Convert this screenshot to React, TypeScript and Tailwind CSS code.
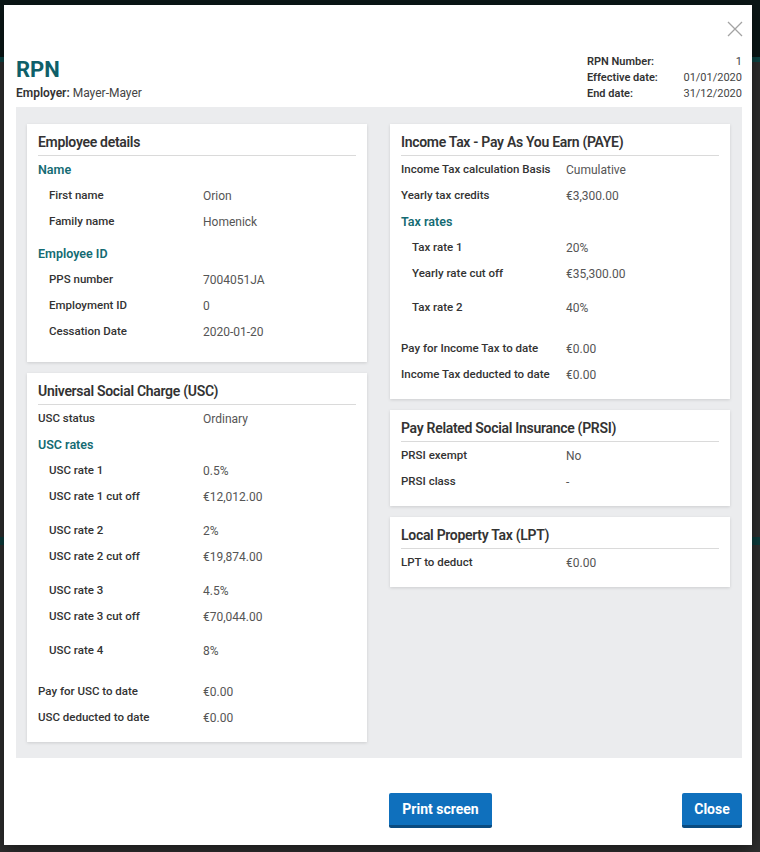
import React from "react";

type RowProps = { label: string; value: string; indent?: boolean };

const Row = ({ label, value, indent }: RowProps) => (
  <div className="flex h-[26px] items-center pt-[2px]">
    <div
      className={
        indent
          ? "w-[165px] shrink-0 pl-[11px] text-[11.5px] font-medium text-[#333]"
          : "w-[165px] shrink-0 text-[11.5px] font-medium text-[#333]"
      }
    >
      {label}
    </div>
    <div className="text-[12px] text-[#555]">{value}</div>
  </div>
);

const Section = ({ title }: { title: string }) => (
  <div className="flex h-[26px] items-center pt-[2px] text-[12.5px] font-semibold text-[#146b73]">
    {title}
  </div>
);

const Card = ({ title, children }: { title: string; children: React.ReactNode }) => (
  <div className="flex flex-col bg-white px-[11px] pt-[8px] pb-[12px] shadow-[0_1px_3px_rgba(0,0,0,0.13)]">
    <h3 className="border-b border-[#dadada] pb-[3px] text-[14px] leading-[20px] font-semibold tracking-[-0.3px] text-[#333]">
      {title}
    </h3>
    {children}
  </div>
);

const CloseIcon = () => (
  <svg width="16" height="16" viewBox="0 0 16 16" fill="none">
    <path d="M1 1L15 15M15 1L1 15" stroke="#a3a3a3" strokeWidth="1.3" />
  </svg>
);

export default function App() {
  return (
    <div
      className="relative h-[852px] w-[760px] overflow-hidden bg-[#2f2f2f]"
      style={{ fontFamily: "Roboto, 'Noto Sans', sans-serif" }}
    >
      {/* page behind the dialog */}
      <div className="h-[57px] bg-[#0b1717]" />
      <div className="h-[5px] bg-[#0d4747]" />
      <div className="mt-[475px] h-[8px] bg-[#0c3d3d]" />

      {/* dialog */}
      <div className="absolute top-[5px] left-[4px] flex h-[840px] w-[748px] flex-col bg-white pt-[49px] pr-[10px] pl-[12px] shadow-[0_4px_16px_rgba(0,0,0,0.5)]">
        <button className="absolute top-[16px] right-[9px]">
          <CloseIcon />
        </button>

        <div className="flex items-start justify-between">
          <div className="pt-[2px]">
            <h1 className="text-[22px] leading-[28px] font-bold text-[#0e5f69]">RPN</h1>
            <p className="mt-[1px] text-[12px] leading-[16px] text-[#444]">
              <span className="font-semibold text-[#333]">Employer:</span> Mayer-Mayer
            </p>
          </div>
          <div className="grid grid-cols-[95px_60px] text-[11px] leading-[16px]">
            <span className="font-semibold text-[#333]">RPN Number:</span>
            <span className="text-right text-[#444]">1</span>
            <span className="font-semibold text-[#333]">Effective date:</span>
            <span className="text-right text-[#444]">01/01/2020</span>
            <span className="font-semibold text-[#333]">End date:</span>
            <span className="text-right text-[#444]">31/12/2020</span>
          </div>
        </div>

        <div className="mt-[5px] grid grid-cols-[340px_340px] items-start gap-x-[23px] bg-[#ebecee] pt-[17px] pr-[12px] pb-[16px] pl-[11px]">
          <div className="flex flex-col gap-[11px]">
            <Card title="Employee details">
              <div className="mb-[6px]">
                <Section title="Name" />
                <Row indent label="First name" value="Orion" />
                <Row indent label="Family name" value="Homenick" />
              </div>
              <div className="mb-[6px]">
                <Section title="Employee ID" />
                <Row indent label="PPS number" value="7004051JA" />
                <Row indent label="Employment ID" value="0" />
                <Row indent label="Cessation Date" value="2020-01-20" />
              </div>
            </Card>

            <Card title="Universal Social Charge (USC)">
              <Row label="USC status" value="Ordinary" />
              <Section title="USC rates" />
              <div className="mb-[8px]">
                <Row indent label="USC rate 1" value="0.5%" />
                <Row indent label="USC rate 1 cut off" value="€12,012.00" />
              </div>
              <div className="mb-[8px]">
                <Row indent label="USC rate 2" value="2%" />
                <Row indent label="USC rate 2 cut off" value="€19,874.00" />
              </div>
              <div className="mb-[8px]">
                <Row indent label="USC rate 3" value="4.5%" />
                <Row indent label="USC rate 3 cut off" value="€70,044.00" />
              </div>
              <div className="mb-[15px]">
                <Row indent label="USC rate 4" value="8%" />
              </div>
              <div>
                <Row label="Pay for USC to date" value="€0.00" />
                <Row label="USC deducted to date" value="€0.00" />
              </div>
            </Card>
          </div>

          <div className="flex flex-col gap-[11px]">
            <Card title="Income Tax - Pay As You Earn (PAYE)">
              <Row label="Income Tax calculation Basis" value="Cumulative" />
              <Row label="Yearly tax credits" value="€3,300.00" />
              <Section title="Tax rates" />
              <div className="mb-[8px]">
                <Row indent label="Tax rate 1" value="20%" />
                <Row indent label="Yearly rate cut off" value="€35,300.00" />
              </div>
              <div className="mb-[15px]">
                <Row indent label="Tax rate 2" value="40%" />
              </div>
              <div>
                <Row label="Pay for Income Tax to date" value="€0.00" />
                <Row label="Income Tax deducted to date" value="€0.00" />
              </div>
            </Card>

            <Card title="Pay Related Social Insurance (PRSI)">
              <Row label="PRSI exempt" value="No" />
              <Row label="PRSI class" value="-" />
            </Card>

            <Card title="Local Property Tax (LPT)">
              <Row label="LPT to deduct" value="€0.00" />
            </Card>
          </div>
        </div>

        <div className="mt-[35px] flex justify-end gap-[190px]">
          <button className="h-[35px] w-[103px] rounded-[2px] border-b-[3px] border-[#0a4b80] bg-[#0f70bd] text-[14px] font-bold text-white">
            Print screen
          </button>
          <button className="h-[35px] w-[60px] rounded-[2px] border-b-[3px] border-[#0a4b80] bg-[#0f70bd] text-[14px] font-bold text-white">
            Close
          </button>
        </div>
      </div>
    </div>
  );
}
